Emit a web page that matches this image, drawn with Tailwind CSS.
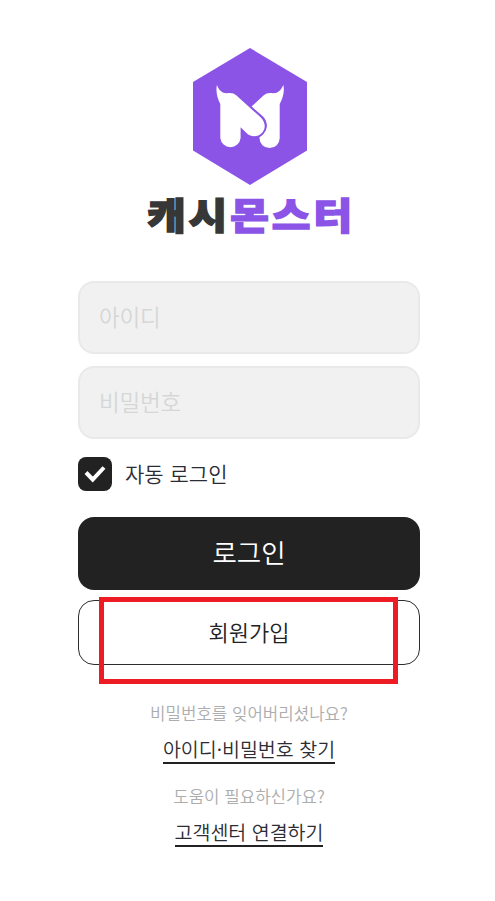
<!DOCTYPE html>
<html lang="ko">
<head>
    <meta charset="UTF-8">
    <meta name="viewport" content="width=device-width, initial-scale=1.0">
    <title>캐시몬스터 로그인</title>
    <script src="https://cdn.jsdelivr.net/npm/@tailwindcss/browser@4"></script>
</head>
<body class="bg-white font-['Noto_Sans_CJK_KR',sans-serif] font-[350] text-[#222222]">

    <main class="w-[342px] ml-[78px] pt-12 flex flex-col">
        <!-- 로고 -->
        <h1 class="flex flex-col items-center">
            <svg class="w-[114px] h-[137px] ml-[2px]" viewBox="13 8 114 137" aria-hidden="true">
                <path fill="#8b54e6" d="M70 8 127 42V110.500L70 145 13 110.500V42Z"/>
                <path fill="#fff" d="M103.300 45C101 50.500 97.500 53.500 93 53.200C88.500 52.700 86 53.300 83.500 55.600L71.500 66.500 83 76.500C89 83 87.500 92 79.500 97V98A10 10 0 0 0 99.700 98V64C102.500 58.500 105 52 103.300 45Z"/>
                <path fill="#fff" stroke="#8b54e6" stroke-width="3.600" d="M57 56 80.800 77.500C85.500 82.500 86 88 82.200 92.700C78 97.300 71 97.300 67 93.500L60.600 87.300Z"/>
                <path fill="#fff" d="M36.900 45C39 50.500 42.500 53.500 47 53.200C51.500 52.700 54 53.300 56.500 55.600L80.800 77.500C85.500 82.500 86 88 82.200 92.700C78 97.300 71 97.300 67 93.500L60.600 87.300V98A10.200 10.200 0 0 1 40.300 98V64C37.500 58.500 35.500 52 36.900 45Z"/>
            </svg>
            <span class="mt-[2px] ml-[4px] h-[54px] scale-y-[0.88] text-[42px] leading-[54px] font-black tracking-[3px] whitespace-nowrap text-[#373737] [-webkit-text-stroke:1.6px_#373737]">캐시<span class="text-[#8b54e6] [-webkit-text-stroke:1.6px_#8b54e6]">몬스터</span></span>
        </h1>

        <!-- 로그인 폼 -->
        <form class="mt-10 flex flex-col">
            <input type="text" placeholder="아이디" class="h-[73px] rounded-2xl border-2 border-[#e9e9e9] bg-[#f1f1f1] px-[19px] pb-[3px] text-[22.5px] tracking-[-0.2px] placeholder:text-[#d5d7d7]">
            <input type="password" placeholder="비밀번호" class="mt-3 h-[73px] rounded-2xl border-2 border-[#e9e9e9] bg-[#f1f1f1] px-[19px] pb-[3px] text-[22.5px] tracking-[-0.2px] placeholder:text-[#d5d7d7]">

            <label class="mt-[18px] flex h-[34px] items-center gap-[13px]">
                <span class="flex size-[34px] items-center justify-center rounded-lg bg-[#222222]">
                    <svg class="size-[34px]" viewBox="0 0 34 34" fill="none" stroke="#fff" stroke-width="4">
                        <path d="M8 15.500 14.700 22.500 26 10.500"/>
                    </svg>
                </span>
                <span class="pb-px text-[21px] leading-[31px] text-[#2c2c34]">자동 로그인</span>
            </label>

            <button type="submit" class="mt-[26px] h-[73px] rounded-2xl bg-[#222222] pb-[3px] text-[26.5px] leading-none text-white">로그인</button>
            <div class="relative mt-2.5 flex">
                <button type="button" class="h-[65px] w-full rounded-2xl border-[1.5px] border-[#2d2d2d] pb-[3px] text-[22px] leading-none">회원가입</button>
                <!-- 강조 표시 -->
                <div class="pointer-events-none absolute -top-[3px] left-[21px] h-[87px] w-[299px] border-5 border-[#ed1c24]"></div>
            </div>
        </form>

        <!-- 하단 링크 -->
        <div class="mt-9 flex flex-col items-center">
            <p class="text-[16.8px] leading-6 text-[#adadad]">비밀번호를 잊어버리셨나요?</p>
            <a href="#" class="mt-[11px] h-[28px] border-b-2 border-[#222222] text-[19.5px] leading-[26px] text-[#2c2c34]">아이디·비밀번호 찾기</a>
            <p class="mt-5 text-[16.8px] leading-6 text-[#adadad]">도움이 필요하신가요?</p>
            <a href="#" class="mt-[11px] h-[28px] border-b-2 border-[#222222] text-[19.5px] leading-[26px] text-[#2c2c34]">고객센터 연결하기</a>
        </div>
    </main>

</body>
</html>
